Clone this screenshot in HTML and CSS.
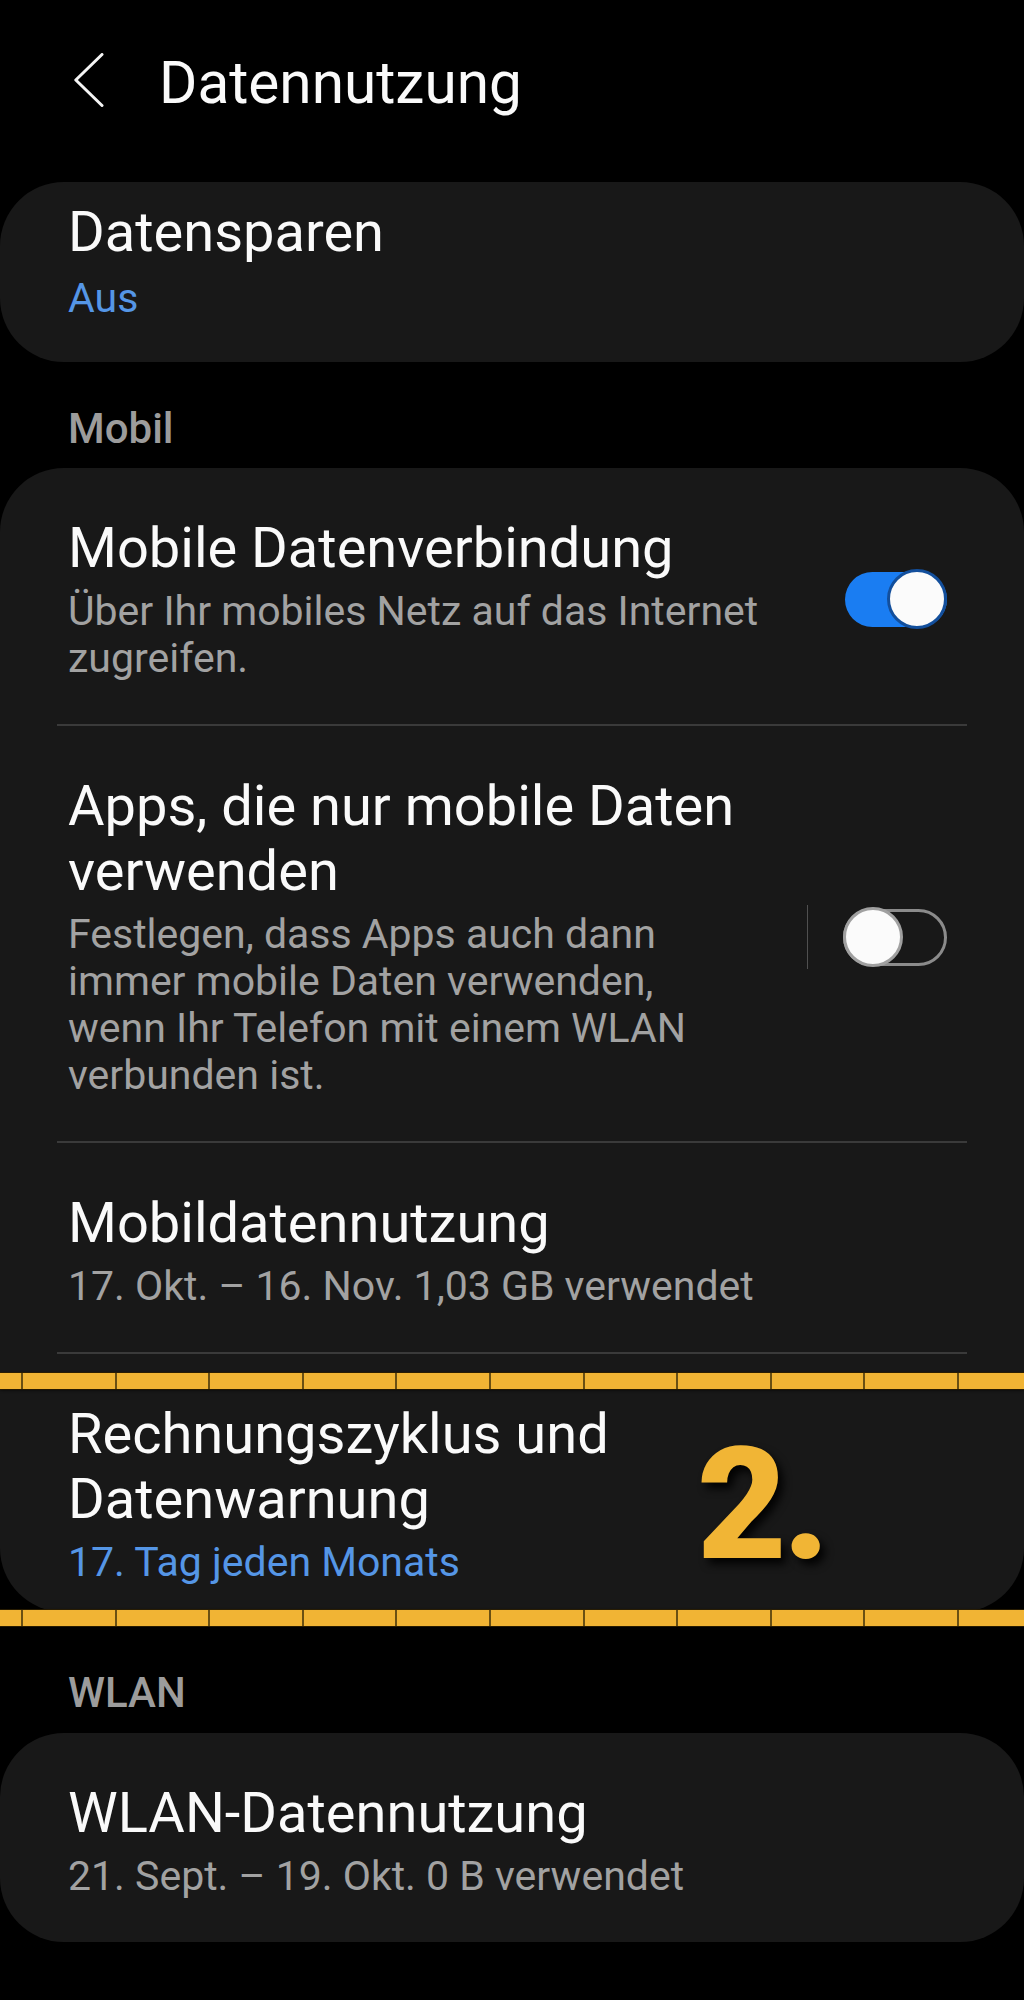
FILE: index.html
```html
<!DOCTYPE html>
<html lang="de">
<head>
<meta charset="utf-8">
<title>Datennutzung</title>
<link rel="stylesheet" href="styles.css">
</head>
<body>
<div class="screen">
  <header class="appbar">
    <svg class="back" width="30" height="54" viewBox="0 0 30 54" aria-hidden="true">
      <polyline points="28,1.5 1.8,27 28,52.5" fill="none" stroke="#f5f5f5" stroke-width="3" stroke-linecap="round" stroke-linejoin="round"/>
    </svg>
    <h1 class="title">Datennutzung</h1>
  </header>

  <section class="card card-first">
    <div class="row row-single">
      <div class="text">
        <div class="primary">Datensparen</div>
        <div class="secondary accent">Aus</div>
      </div>
    </div>
  </section>

  <h2 class="label">Mobil</h2>
  <section class="card">
    <div class="row">
      <div class="text">
        <div class="primary">Mobile Datenverbindung</div>
        <div class="secondary">Über Ihr mobiles Netz auf das Internet zugreifen.</div>
      </div>
      <div class="switch on"><span class="track"></span><span class="knob"></span></div>
    </div>
    <div class="divider"></div>
    <div class="row">
      <div class="text">
        <div class="primary">Apps, die nur mobile Daten verwenden</div>
        <div class="secondary secondary-pad">Festlegen, dass Apps auch dann immer mobile Daten verwenden, wenn Ihr Telefon mit einem WLAN verbunden ist.</div>
      </div>
      <span class="sep"></span>
      <div class="switch off"><span class="track"></span><span class="knob"></span></div>
    </div>
    <div class="divider"></div>
    <div class="row">
      <div class="text">
        <div class="primary">Mobildatennutzung</div>
        <div class="secondary">17. Okt. – 16. Nov. 1,03 GB verwendet</div>
      </div>
    </div>
    <div class="divider"></div>
    <div class="row row-last row-marked">
      <div class="text text-narrow">
        <div class="primary">Rechnungszyklus und Datenwarnung</div>
        <div class="secondary accent">17. Tag jeden Monats</div>
      </div>
      <span class="hl-bar hl-top"></span>
      <span class="hl-bar hl-bottom"></span>
      <span class="step">2.</span>
    </div>
  </section>

  <h2 class="label label-wlan">WLAN</h2>
  <section class="card">
    <div class="row">
      <div class="text">
        <div class="primary">WLAN-Datennutzung</div>
        <div class="secondary">21. Sept. – 19. Okt. 0 B verwendet</div>
      </div>
    </div>
  </section>
</div>
</body>
</html>
```

FILE: styles.css
```css
* { box-sizing: border-box; }

html, body {
  margin: 0;
  background: #000;
}

body {
  font-family: Roboto, "Liberation Sans", sans-serif;
  color: #fafafa;
}

.screen {
  width: 1024px;
  min-height: 2000px;
}

.appbar {
  display: flex;
  align-items: center;
  height: 68px;
  margin-top: 49px;
  padding-left: 74px;
}

.back {
  flex: none;
  margin-bottom: 6px;
}

.title {
  margin: 0 0 0 55px;
  font-size: 58.5px;
  font-weight: 400;
  line-height: 68px;
  color: #fafafa;
}

.card {
  background: #181818;
  border-radius: 64px;
}

.card-first {
  margin-top: 65px;
}

.row {
  display: flex;
  align-items: center;
  padding: 48px 77px 42px 68px;
}

.row-single {
  padding: 18px 77px 40px 68px;
}

.row-last {
  padding-bottom: 26px;
}

.row-marked {
  position: relative;
}

.text {
  flex: 1;
  min-width: 0;
}

.text-narrow {
  max-width: 640px;
  flex: none;
}

.primary {
  font-size: 56px;
  line-height: 65px;
  font-weight: 400;
  color: #fafafa;
}

.secondary {
  margin-top: 7px;
  font-size: 41px;
  line-height: 47px;
  color: #a2a2a2;
}

.secondary-pad {
  padding-right: 50px;
}

.row-single .secondary {
  margin-top: 10px;
}

.accent {
  color: #5596e6;
}

.label {
  margin: 42px 0 14px;
  padding-left: 68px;
  font-size: 42px;
  line-height: 50px;
  font-weight: 500;
  color: #9c9c9c;
}

.label-wlan {
  margin-top: 56px;
  margin-bottom: 15px;
}

.divider {
  height: 2px;
  margin: 0 57px;
  background: #3a3a3a;
}

.sep {
  flex: none;
  width: 1px;
  height: 64px;
  margin: 0 35px 0 37px;
  background: #505050;
}

.switch {
  position: relative;
  flex: none;
  width: 104px;
  height: 60px;
}

.switch.on {
  margin-left: 40px;
}

.switch .track {
  position: absolute;
  border-radius: 30px;
}

.switch.on .track {
  left: 2px;
  right: 0;
  top: 3px;
  bottom: 2px;
  background: #1a7df2;
}

.switch.off .track {
  left: 0;
  right: 0;
  top: 2px;
  bottom: 1px;
  border: 3px solid #8b8b8b;
}

.switch .knob {
  position: absolute;
  top: 0;
  width: 60px;
  height: 60px;
  border-radius: 50%;
  background: #fbfbfb;
}

.switch.on .knob {
  right: 0;
  border: 3px solid #134f9c;
}

.switch.off .knob {
  left: 0;
  border: 3px solid #a0a0a0;
}

/* annotation overlay */
.hl-bar {
  position: absolute;
  left: 0;
  width: 1024px;
  height: 16px;
  background-color: #f1b434;
  background-image: repeating-linear-gradient(90deg, #6a5013 0 2px, #f1b434 2px 93.6px);
  background-position: 21px 0;
  box-shadow: 0 0 0 1px rgba(45, 30, 0, 0.85), 0 1px 3px rgba(0, 0, 0, 0.8);
}

.hl-top {
  top: 19px;
}

.hl-bottom {
  top: 256px;
}

.step {
  position: absolute;
  left: 697px;
  top: 74px;
  font-family: Roboto, "Liberation Sans", sans-serif;
  font-size: 155px;
  line-height: 155px;
  font-weight: 900;
  letter-spacing: -4px;
  color: #f1b535;
  text-shadow: 5px 6px 8px rgba(0, 0, 0, 0.9);
}
```
